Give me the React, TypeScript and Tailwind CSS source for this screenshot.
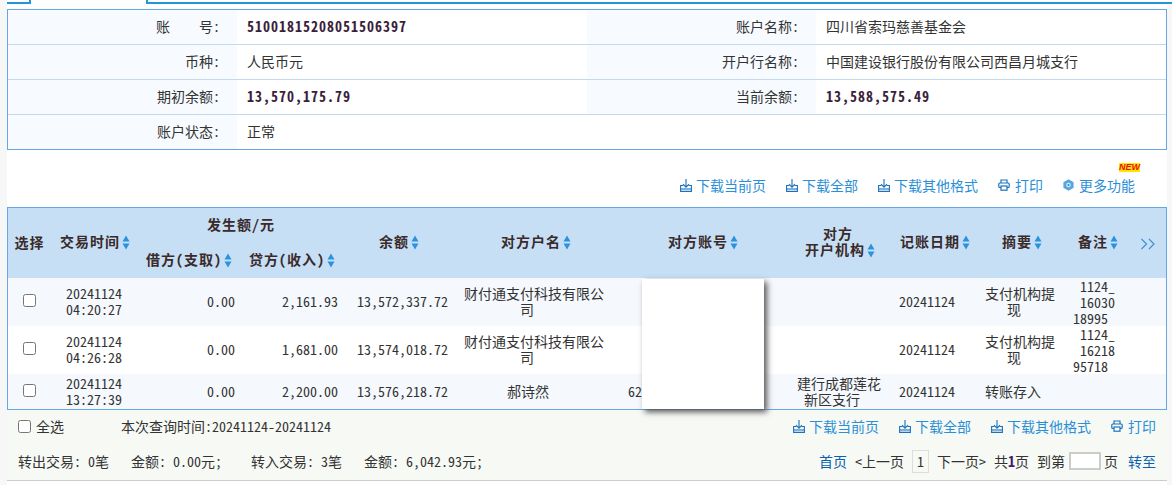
const downloadIcon = (
  <svg width="12" height="13" viewBox="0 0 12 13" fill="none" stroke="#1a72bd" strokeWidth="1.1">
    <path d="M6 0V8M3 5.2L6 8.2L9 5.2" />
    <path d="M3.5 6.5H0.6V12.4H11.4V6.5H8.5" />
    <path d="M1 10H11" />
  </svg>
);

const printIcon = (
  <svg width="12" height="12" viewBox="0 0 12 12" fill="none" stroke="#1a72bd" strokeWidth="1.2">
    <path d="M3 4V1H9V4" />
    <rect x="0.8" y="4" width="10.4" height="4.5" rx="1" />
    <rect x="3" y="7" width="6" height="4.2" fill="#fff" />
  </svg>
);

const gearIcon = (
  <svg width="11" height="12" viewBox="0 0 11 12">
    <path d="M5.5 0.3L10.6 3.2V8.8L5.5 11.7L0.4 8.8V3.2Z" fill="#58a6e0" />
    <circle cx="5.5" cy="6" r="2.3" fill="#d6ebfa" />
    <circle cx="5.5" cy="6" r="1.1" fill="#2f86cf" />
  </svg>
);

function SortArrows() {
  return (
    <svg width="8" height="15" viewBox="0 0 8 15" className="ml-[2px] inline-block align-[-3px]" fill="#2b93dc">
      <path d="M4 0.5L7.5 6.5H0.5Z" />
      <path d="M0.5 8.5H7.5L4 14.5Z" />
    </svg>
  );
}

function ToolLink({ icon, label, gap }: { icon: React.ReactNode; label: string; gap?: boolean }) {
  return (
    <a className={gap ? "flex h-[16px] items-center gap-[5px] text-[#2b8fd6]" : "flex h-[16px] items-center gap-[4px] text-[#2b8fd6]"}>
      {icon}
      <span>{label}</span>
    </a>
  );
}

function InfoCell({ label, children }: { label?: React.ReactNode; children?: React.ReactNode }) {
  return (
    <>
      <div className={label ? "bg-[#f7fbff] pr-[17px] text-right leading-[32px]" : "leading-[32px]"}>{label}</div>
      <div className="pl-[10px] leading-[32px]">{children}</div>
    </>
  );
}

function Amount({ children }: { children: React.ReactNode }) {
  return <span className="font-bold tracking-[1px] text-[#3a1f3c]">{children}</span>;
}

const rows = [
  {
    time: ["20241124", "04:20:27"],
    debit: "0.00",
    credit: "2,161.93",
    balance: "13,572,337.72",
    remark: ["1124_", "16030", "18995"],
  },
  {
    time: ["20241124", "04:26:28"],
    debit: "0.00",
    credit: "1,681.00",
    balance: "13,574,018.72",
    remark: ["1124_", "16218", "95718"],
  },
];

export default function App() {
  return (
    <div className="relative flex h-[485px] w-[1172px] flex-col overflow-hidden bg-[#f7f7f7] font-['Noto_Sans_CJK_SC','Liberation_Sans',sans-serif] text-[14px] leading-[16px] text-[#333] [font-feature-settings:'hwid']">
      {/* tab strip */}
      <div className="flex h-[4px] pl-[7px]">
        <div className="w-[24px] border-r-2 border-b-2 border-[#2196d8] bg-white" />
        <div className="w-[115px] bg-white" />
        <div className="flex-1 border-b-2 border-l-2 border-[#2196d8] bg-white" />
      </div>

      <div className="ml-[7px] flex w-[1160px] flex-1 flex-col bg-white pt-[5px]">
        {/* account info */}
        <div className="border-x border-t border-[#64a7e4]">
          {[0, 1, 2, 3].map((row) => (
            <div
              key={row}
              className={
                row === 3
                  ? "grid h-[35px] grid-cols-[229px_350px_229px_350px] border-b border-[#64a7e4]"
                  : "grid h-[35px] grid-cols-[229px_350px_229px_350px] border-b border-[#c3d9ee]"
              }
            >
              {row === 0 && (
                <>
                  <InfoCell
                    label={
                      <>
                        <span className="mr-[29px]">账</span>号:
                      </>
                    }
                  >
                    <Amount>51001815208051506397</Amount>
                  </InfoCell>
                  <InfoCell label="账户名称:">四川省索玛慈善基金会</InfoCell>
                </>
              )}
              {row === 1 && (
                <>
                  <InfoCell label="币种:">人民币元</InfoCell>
                  <InfoCell label="开户行名称:">中国建设银行股份有限公司西昌月城支行</InfoCell>
                </>
              )}
              {row === 2 && (
                <>
                  <InfoCell label="期初余额:">
                    <Amount>13,570,175.79</Amount>
                  </InfoCell>
                  <InfoCell label="当前余额:">
                    <Amount>13,588,575.49</Amount>
                  </InfoCell>
                </>
              )}
              {row === 3 && (
                <>
                  <InfoCell label="账户状态:">正常</InfoCell>
                  <InfoCell />
                </>
              )}
            </div>
          ))}
        </div>

        {/* top toolbar */}
        <div className="flex h-[57px] items-start justify-end gap-[20px] pt-[27px] pr-[32px]">
          <ToolLink icon={downloadIcon} label="下载当前页" />
          <ToolLink icon={downloadIcon} label="下载全部" />
          <ToolLink icon={downloadIcon} label="下载其他格式" />
          <ToolLink icon={printIcon} label="打印" gap />
          <div className="relative">
            <ToolLink icon={gearIcon} label="更多功能" gap />
            <span className="absolute top-[-14px] right-[-5px] bg-[#ffe600] font-['Liberation_Sans',sans-serif] text-[9px] leading-[9px] font-bold text-[#e8101a] italic">
              NEW
            </span>
          </div>
        </div>

        {/* transactions */}
        <div className="border border-[#64a7e4]">
          <table className="w-[1158px] table-fixed border-collapse">
            <colgroup>
              <col className="w-[44px]" />
              <col className="w-[86px]" />
              <col className="w-[102px]" />
              <col className="w-[104px]" />
              <col className="w-[110px]" />
              <col className="w-[164px]" />
              <col className="w-[170px]" />
              <col className="w-[104px]" />
              <col className="w-[86px]" />
              <col className="w-[88px]" />
              <col className="w-[64px]" />
              <col className="w-[36px]" />
            </colgroup>
            <thead className="bg-[#c6dff5] text-center font-bold tracking-[1px] text-[#3a2a2a] [&_th]:pb-[3px]">
              <tr className="h-[35px]">
                <th rowSpan={2} className="pr-[1px]">选择</th>
                <th rowSpan={2}>
                  交易时间
                  <SortArrows />
                </th>
                <th colSpan={2}>发生额/元</th>
                <th rowSpan={2}>
                  余额
                  <SortArrows />
                </th>
                <th rowSpan={2}>
                  对方户名
                  <SortArrows />
                </th>
                <th rowSpan={2}>
                  对方账号
                  <SortArrows />
                </th>
                <th rowSpan={2}>
                  <span className="mr-[4px]">对方</span>
                  <br />
                  开户机构
                  <SortArrows />
                </th>
                <th rowSpan={2}>
                  记账日期
                  <SortArrows />
                </th>
                <th rowSpan={2}>
                  摘要
                  <SortArrows />
                </th>
                <th rowSpan={2}>
                  备注
                  <SortArrows />
                </th>
                <th rowSpan={2}>
                  <svg width="16" height="12" viewBox="0 0 16 12" className="inline-block" fill="none" stroke="#3f8fdc" strokeWidth="1.2">
                    <path d="M1.5 1L6.5 6L1.5 11M9 1L14 6L9 11" />
                  </svg>
                </th>
              </tr>
              <tr className="h-[35px]">
                <th className="whitespace-nowrap">
                  借方(支取)
                  <SortArrows />
                </th>
                <th className="whitespace-nowrap">
                  贷方(收入)
                  <SortArrows />
                </th>
              </tr>
            </thead>
            <tbody className="[&_td]:pb-[2px]">
              {rows.map((row, index) => (
                <tr key={row.balance} className={index === 0 ? "h-[48px] bg-[#f5f9fd]" : "h-[48px] bg-white"}>
                  <td className="pr-[2px] text-center">
                    <input type="checkbox" className="size-[13px] align-[0px]" readOnly />
                  </td>
                  <td className="pr-[2px] text-center">
                    {row.time[0]}
                    <br />
                    {row.time[1]}
                  </td>
                  <td className="pr-[5px] text-right">{row.debit}</td>
                  <td className="pr-[6px] text-right">{row.credit}</td>
                  <td className="pr-[6px] text-right">{row.balance}</td>
                  <td className="pl-[10px]">
                    财付通支付科技有限公
                    <br />
                    <span className="ml-[56px]">司</span>
                  </td>
                  <td />
                  <td />
                  <td className="pl-[7px]">20241124</td>
                  <td className="pl-[7px]">
                    支付机构提
                    <br />
                    <span className="ml-[22px]">现</span>
                  </td>
                  <td className="pl-[14px]">
                    <div className="mb-[-2px]">
                      {row.remark[0]}
                      <br />
                      {row.remark[1]}
                      <br />
                      <span className="ml-[-7px]">{row.remark[2]}</span>
                    </div>
                  </td>
                  <td />
                </tr>
              ))}
              <tr className="h-[35px] bg-[#f5f9fd]">
                <td className="pr-[2px] text-center">
                  <input type="checkbox" className="size-[13px] align-[0px]" readOnly />
                </td>
                <td className="pr-[2px] text-center">
                  20241124
                  <br />
                  13:27:39
                </td>
                <td className="pr-[5px] text-right">0.00</td>
                <td className="pr-[6px] text-right">2,200.00</td>
                <td className="pr-[6px] text-right">13,576,218.72</td>
                <td className="pl-[53px]">郝诗然</td>
                <td className="pl-[10px]">62</td>
                <td className="pl-[9px]">
                  建行成都莲花
                  <br />
                  <span className="ml-[7px]">新区支行</span>
                </td>
                <td className="pl-[7px]">20241124</td>
                <td className="pl-[7px]">转账存入</td>
                <td />
                <td />
              </tr>
            </tbody>
          </table>
        </div>

        {/* footer */}
        <div className="flex flex-col border-b border-[#cccccc] bg-[#f7f9f5] px-[11px]">
          <div className="flex h-[35px] items-center justify-between pb-[3px]">
            <div className="flex items-center">
              <input type="checkbox" className="size-[13px]" readOnly />
              <span className="ml-[5px]">全选</span>
              <span className="ml-[57px]">本次查询时间:20241124-20241124</span>
            </div>
            <div className="flex gap-[20px]">
              <ToolLink icon={downloadIcon} label="下载当前页" />
              <ToolLink icon={downloadIcon} label="下载全部" />
              <ToolLink icon={downloadIcon} label="下载其他格式" />
              <ToolLink icon={printIcon} label="打印" gap />
            </div>
          </div>
          <div className="flex h-[35px] items-center justify-between pb-[3px]">
            <div className="flex">
              <span>转出交易: 0笔</span>
              <span className="ml-[22px]">金额: 0.00元;</span>
              <span className="ml-[29px]">转入交易: 3笔</span>
              <span className="ml-[22px]">金额: 6,042.93元;</span>
            </div>
            <div className="flex items-center gap-[8px]">
              <a className="text-[#0a62ad]">首页</a>
              <span>&lt;上一页</span>
              <span className="flex h-[23px] w-[17px] items-center justify-center border border-[#dddddd]">1</span>
              <span>下一页&gt;</span>
              <span>
                共<b className="text-[#3a1f6c]">1</b>页
              </span>
              <span>到第</span>
              <input className="ml-[-4px] h-[18px] w-[32px] border-2 border-[#cccccc] bg-white" readOnly />
              <span className="ml-[-5px]">页</span>
              <a className="ml-[2px] text-[#0a62ad]">转至</a>
            </div>
          </div>
        </div>
      </div>

      {/* redaction box over the account column */}
      <div className="absolute top-[279px] left-[642px] h-[130px] w-[122px] bg-white shadow-[3px_3px_6px_#555555]" />
    </div>
  );
}
